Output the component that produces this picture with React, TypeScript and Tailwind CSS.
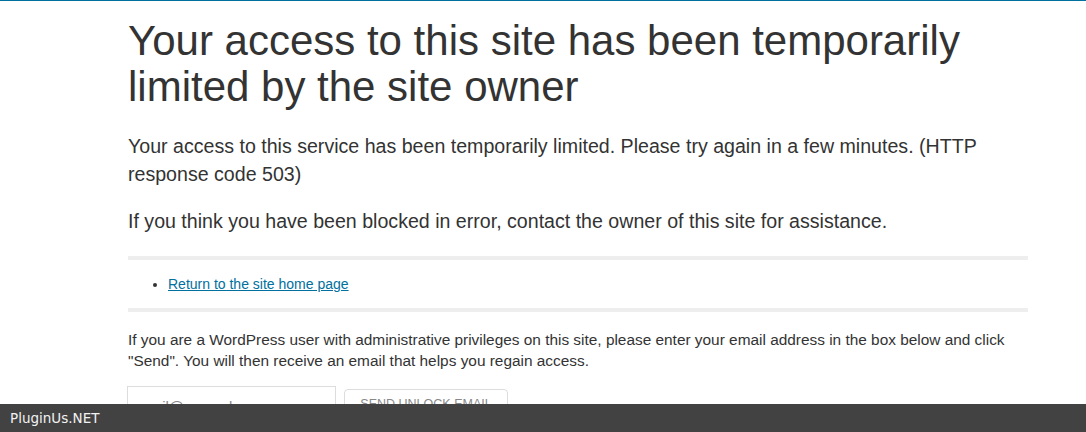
export default function App() {
  return (
    <div className="min-h-[432px] bg-white border-t border-[#00709e] font-['Liberation_Sans',Arial,sans-serif] text-[#333]">
      <div className="w-[900px] ml-[128px] pt-[17px]">
        <h1 className="text-[42px] leading-[46px] font-normal">
          Your access to this site has been temporarily limited by the site owner
        </h1>
        <p className="mt-[22px] text-[19.6px] leading-[28px]">
          Your access to this service has been temporarily limited. Please try again in a few minutes. (HTTP response code 503)
        </p>
        <p className="mt-[19px] text-[19.6px] leading-[28px]">
          If you think you have been blocked in error, contact the owner of this site for assistance.
        </p>
        <hr className="mt-[21px] border-0 h-[4px] bg-[#eee]" />
        <ul className="list-disc pl-[40px] py-[14px] text-[14px] leading-[20px]">
          <li>
            <a href="#" className="text-[#00709e] underline">
              Return to the site home page
            </a>
          </li>
        </ul>
        <hr className="border-0 h-[4px] bg-[#eee]" />
        <p className="mt-[17px] text-[15.4px] leading-[21px]">
          If you are a WordPress user with administrative privileges on this site, please enter your email address in the box below and click "Send". You will then receive an email that helps you regain access.
        </p>
        <div className="mt-[15px] flex items-start gap-[8px] -ml-px">
          <input
            type="email"
            placeholder="email@example.com"
            className="w-[209px] h-[40px] border border-[#ddd] px-[5px] text-[15px] placeholder:text-[#888] outline-none"
          />
          <button className="mt-[3px] w-[164px] h-[36px] border border-[#ddd] rounded-[4px] bg-white pb-[6px] text-[12.5px] text-[#888] uppercase">
            Send Unlock Email
          </button>
        </div>
      </div>
      <div className="fixed bottom-0 left-0 right-0 h-[28px] bg-[#424242] flex items-center px-[10px] font-['DejaVu_Sans',sans-serif] text-[13.5px] text-[#f2f2f2]">
        PluginUs.NET
      </div>
    </div>
  );
}
